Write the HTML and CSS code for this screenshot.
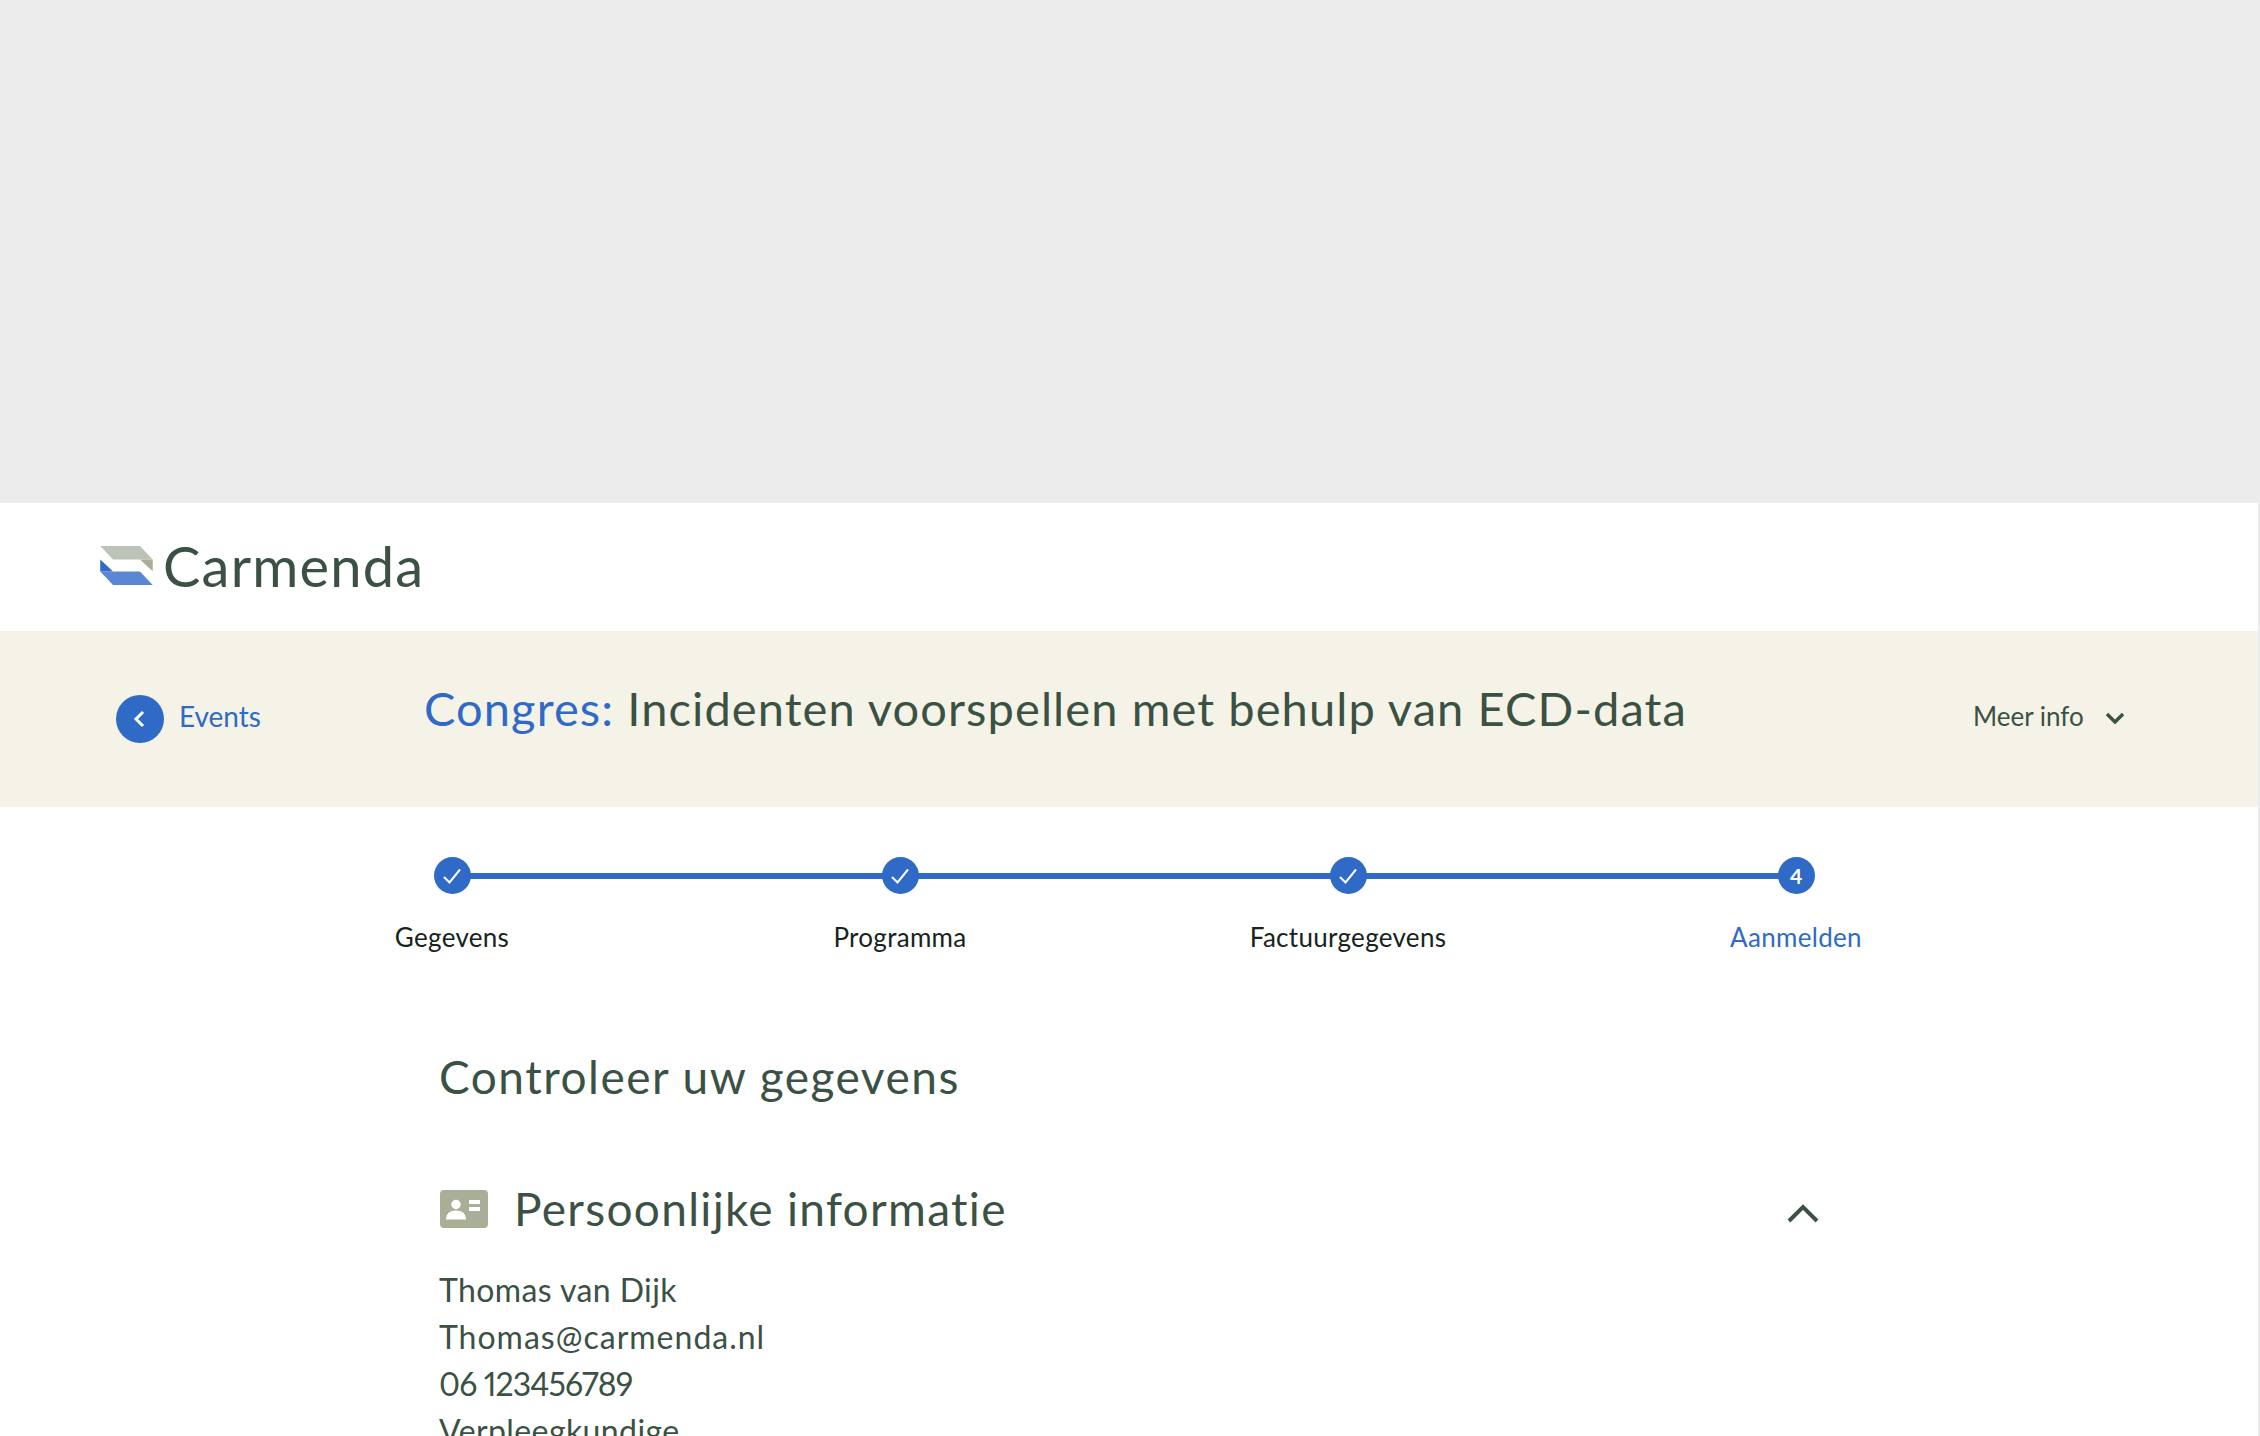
FILE: index.html
```html
<!DOCTYPE html>
<html lang="nl">
<head>
<meta charset="utf-8">
<title>Carmenda</title>
<link rel="stylesheet" href="styles.css">
</head>
<body>
<div class="page">
  <div class="hero"></div>
  <header class="brand">
    <svg class="logo" viewBox="0 0 156 116" aria-hidden="true">
      <polygon points="0,0 118,0 156,40 38,40" fill="#bcc3b8"/>
      <polygon points="118,40 156,40 156,75" fill="#a9ae97"/>
      <polygon points="0,40 38,76 0,76" fill="#2f6bc6"/>
      <polygon points="0,76 118,76 156,116 38,116" fill="#5b86d3"/>
    </svg>
    <span class="brand-name">Carmenda</span>
  </header>
  <section class="banner">
    <a class="back">
      <span class="back-dot">
        <svg class="back-icon" viewBox="0 0 14 20" aria-hidden="true"><path d="M11 3 4 10l7 7" fill="none" stroke="#fff" stroke-width="3"/></svg>
      </span>
      <span class="back-label">Events</span>
    </a>
    <h1 class="title"><span class="title-kind">Congres:</span> Incidenten voorspellen met behulp van ECD-data</h1>
    <a class="more">
      <span>Meer info</span>
      <svg class="more-icon" viewBox="0 0 20 12" aria-hidden="true"><path d="M2 2l8 8 8-8" fill="none" stroke="#3a5144" stroke-width="3.400"/></svg>
    </a>
  </section>
  <ol class="steps">
    <li class="step step-line">
      <span class="dot"><svg class="check" viewBox="0 0 20 20" aria-hidden="true"><path d="M2 11l5.500 5.500L18 3.500" fill="none" stroke="#fff" stroke-width="2"/></svg></span>
      <span class="step-label">Gegevens</span>
    </li>
    <li class="step step-line">
      <span class="dot"><svg class="check" viewBox="0 0 20 20" aria-hidden="true"><path d="M2 11l5.500 5.500L18 3.500" fill="none" stroke="#fff" stroke-width="2"/></svg></span>
      <span class="step-label">Programma</span>
    </li>
    <li class="step step-line">
      <span class="dot"><svg class="check" viewBox="0 0 20 20" aria-hidden="true"><path d="M2 11l5.500 5.500L18 3.500" fill="none" stroke="#fff" stroke-width="2"/></svg></span>
      <span class="step-label">Factuurgegevens</span>
    </li>
    <li class="step">
      <span class="dot">4</span>
      <span class="step-label step-current">Aanmelden</span>
    </li>
  </ol>
  <main class="content">
    <h2 class="heading">Controleer uw gegevens</h2>
    <div class="section-head">
      <svg class="card-icon" viewBox="0 0 48 38" aria-hidden="true">
        <rect width="48" height="38" rx="4" fill="#a9ae97"/>
        <circle cx="16" cy="14.500" r="4.700" fill="#fff"/>
        <path d="M6 29.500c0-6 4-9 10-9s10 3 10 9z" fill="#fff"/>
        <rect x="29" y="10" width="11" height="4" fill="#fff"/>
        <rect x="29" y="17" width="11" height="4" fill="#fff"/>
      </svg>
      <h3 class="section-title">Persoonlijke informatie</h3>
      <svg class="collapse-icon" viewBox="0 0 32 20" aria-hidden="true"><path d="M2 17 16 3l14 14" fill="none" stroke="#3a5144" stroke-width="4"/></svg>
    </div>
    <ul class="details">
      <li>Thomas van Dijk</li>
      <li class="detail-email">Thomas@carmenda.nl</li>
      <li class="detail-phone">06 123456789</li>
      <li>Verpleegkundige</li>
    </ul>
  </main>
</div>
</body>
</html>
```
FILE: styles.css
```css
* { box-sizing: border-box; }
html, body { margin: 0; height: 100%; overflow: hidden; background: #fff; }
body { font-family: "Lato", "Noto Sans", sans-serif; color: #3a5144; }
h1, h2, h3, ol, ul { margin: 0; padding: 0; font-weight: 400; list-style: none; }

.page { height: 1436px; overflow: hidden; border-right: 2px solid #ececec; }
.hero { height: 503px; background: #ececec; margin-right: -2px; }

.brand { height: 128px; display: flex; align-items: center; padding: 0 0 3px 100px; gap: 10px; }
.logo { width: 53px; height: 39px; }
.brand-name { font-size: 56px; line-height: 1; letter-spacing: 1.2px; }

.banner { height: 176px; background: #f5f3e7; display: flex; align-items: center; padding-left: 116px; }
.back { display: flex; align-items: center; gap: 16px; width: 308px; color: #2f6bc6; font-size: 28px; }
.back-label { margin: -6px 0 0 -1px; }
.back-dot { width: 48px; height: 48px; border-radius: 50%; background: #2f6bc6; display: flex; align-items: center; justify-content: center; }
.back-icon { width: 14px; height: 20px; margin-left: -2px; }
.title { font-size: 47px; line-height: 1; width: 1550px; margin-bottom: 22px; letter-spacing: 1.1px; white-space: nowrap; }
.title-kind { color: #2f6bc6; }
.more { display: flex; align-items: center; gap: 21px; font-size: 26px; white-space: nowrap; margin: -6px 0 0 -1px; }
.more-icon { width: 20px; height: 12px; margin-top: 4px; }

.steps { display: grid; grid-template-columns: repeat(4, 448px); padding: 50px 0 0 228px; }
.step { position: relative; display: flex; flex-direction: column; align-items: center; gap: 27px; }
.step-line::after { content: ""; position: absolute; top: 16px; left: 50%; width: 100%; height: 6px; background: #2f6bc6; }
.dot { position: relative; z-index: 1; width: 37px; height: 37px; border-radius: 50%; background: #2f6bc6; color: #fff; font-size: 21px; font-weight: 700; display: flex; align-items: center; justify-content: center; }
.check { width: 20px; height: 20px; }
.step-label { font-size: 26px; line-height: 32px; letter-spacing: 0.3px; color: #17241c; white-space: nowrap; }
.step-current { color: #2f6bc6; }

.content { padding: 94px 0 0 439px; width: 1819px; }
.heading { font-size: 46px; line-height: 60px; letter-spacing: 1.5px; }
.section-head { display: flex; align-items: center; margin-top: 81px; height: 46px; }
.card-icon { width: 48px; height: 38px; margin: -4px 27px 0 1px; }
.section-title { font-size: 46px; line-height: 46px; letter-spacing: 1.3px; flex: 1; margin: -4px 0 0 -1px; }
.collapse-icon { width: 32px; height: 20px; margin-top: 6px; }
.details { margin-top: 32px; font-size: 32px; line-height: 47px; letter-spacing: 0.4px; }
.detail-email { letter-spacing: 1px; }
.detail-phone { font-variant-numeric: proportional-nums; letter-spacing: -0.9px; }
```
